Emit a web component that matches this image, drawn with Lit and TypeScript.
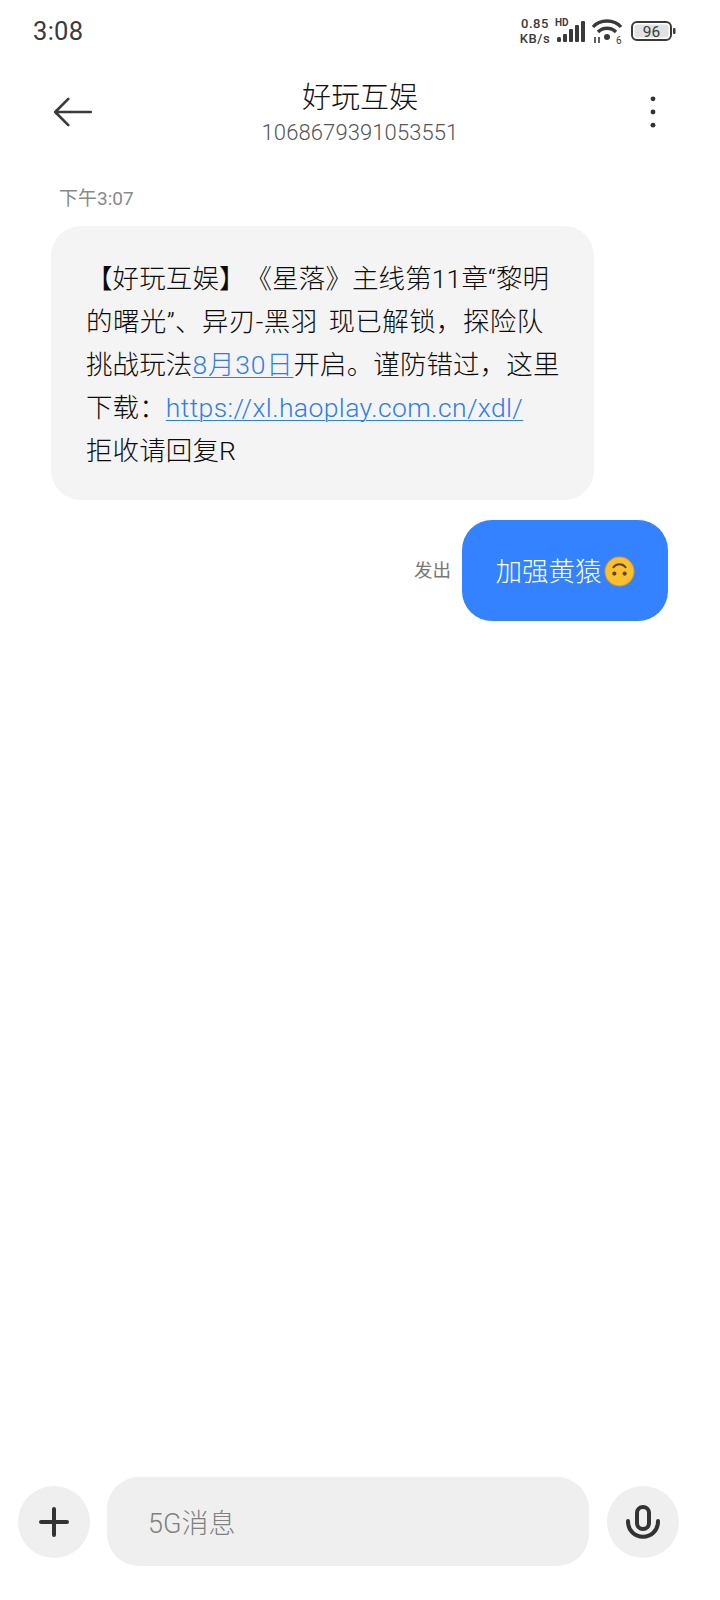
import { LitElement, css, html } from 'lit';
import { customElement } from 'lit/decorators.js';

@customElement('app-root')
export class AppRoot extends LitElement {
    static styles = css`
        :host {
            display: block;
            width: 720px;
            height: 1600px;
            background: #fff;
            font-family: "Roboto", "Noto Sans CJK SC", sans-serif;
            color: #1c1c1c;
            text-spacing-trim: space-all;
        }

        .page {
            height: 1600px;
            display: flex;
            flex-direction: column;
            overflow: hidden;
        }

        .status {
            height: 62px;
            flex: none;
            padding: 0 43px 0 33px;
            display: flex;
            align-items: center;
            justify-content: space-between;
            color: #3a3a3a;
        }

        .clock {
            font-size: 25.5px;
            letter-spacing: 0.3px;
        }

        .status-icons {
            display: flex;
            align-items: center;
            gap: 3px;
        }

        .speed {
            font-size: 13px;
            line-height: 15.5px;
            font-weight: 500;
            letter-spacing: 0.6px;
            text-align: center;
            width: 34px;
        }

        .header {
            height: 100px;
            flex: none;
            padding: 0 53px;
            display: grid;
            grid-template-columns: 1fr auto 1fr;
            align-items: center;
        }

        .more {
            justify-self: end;
            margin-right: 11px;
        }

        .peer {
            display: flex;
            flex-direction: column;
            align-items: center;
        }

        .peer-name {
            font-size: 29px;
            line-height: 42px;
            font-weight: 300;
            color: #111;
        }

        .peer-number {
            font-size: 22px;
            line-height: 28px;
            font-weight: 300;
            letter-spacing: 0.1px;
            color: #555;
        }

        .thread {
            flex: 1;
            padding: 24px 52px 0 51px;
            display: flex;
            flex-direction: column;
        }

        .time {
            margin-left: 8px;
            font-size: 19px;
            line-height: 26px;
            color: #8a8a8a;
        }

        .bubble {
            margin-top: 14px;
            width: 543px;
            height: 274px;
            box-sizing: border-box;
            padding: 31px 0 0 35px;
            background: #f4f4f4;
            border-radius: 30px;
            font-size: 26.5px;
            line-height: 43px;
            font-weight: 300;
            letter-spacing: 0.1px;
            word-spacing: 4px;
            white-space: nowrap;
            color: #0c0c0c;
        }

        .bubble a {
            color: #2f7ee8;
            text-decoration: underline;
            text-decoration-thickness: 1px;
            text-underline-offset: 3px;
        }

        .second-line {
            letter-spacing: 0.4px;
        }

        .date {
            letter-spacing: 0.8px;
        }

        .url {
            letter-spacing: 0.4px;
        }

        .sent-row {
            margin-top: 20px;
            display: flex;
            justify-content: flex-end;
            align-items: center;
            gap: 11px;
        }

        .sent-label {
            font-size: 18.5px;
            color: #777;
            margin-top: -4px;
        }

        .sent {
            width: 206px;
            height: 101px;
            box-sizing: border-box;
            padding-bottom: 3px;
            display: flex;
            align-items: center;
            justify-content: center;
            gap: 2px;
            background: #3482ff;
            border-radius: 30px;
            color: #fff;
            font-size: 26.5px;
            font-weight: 300;
        }

        .emoji {
            margin-top: 4px;
        }

        .composer {
            flex: none;
            height: 89px;
            margin-bottom: 34px;
            padding: 0 41px 0 18px;
            display: flex;
            align-items: center;
        }

        .round {
            width: 72px;
            height: 72px;
            flex: none;
            border-radius: 50%;
            background: #efefef;
            display: flex;
            align-items: center;
            justify-content: center;
        }

        .field {
            flex: 1;
            height: 89px;
            margin: 0 18px 0 17px;
            padding-left: 41px;
            display: flex;
            align-items: center;
            background: #efefef;
            border-radius: 32px;
            font-size: 27px;
            font-weight: 300;
            color: #808080;
        }
    `;

    render() {
        return html`
            <div class="page">
                <div class="status">
                    <span class="clock">3:08</span>
                    <div class="status-icons">
                        <div class="speed">0.85<br>KB/s</div>
                        <svg width="33" height="26" viewBox="0 0 33 26" fill="#3a3a3a">
                            <text x="0" y="8" font-size="10" font-weight="700" font-family="Roboto">HD</text>
                            <rect x="2" y="19" width="4" height="5" rx="1.5"/>
                            <rect x="8" y="16" width="4" height="8" rx="1"/>
                            <rect x="14" y="11" width="4" height="13" rx="1"/>
                            <rect x="20" y="7" width="4" height="17" rx="1"/>
                            <rect x="26" y="3" width="4" height="21" rx="1"/>
                        </svg>
                        <svg width="32" height="28" viewBox="0 0 32 28" fill="none" stroke="#3a3a3a" stroke-width="3.4">
                            <path d="M2 10 C9 2 23 2 30 10"/>
                            <path d="M7 15 C12 10 20 10 25 15"/>
                            <circle cx="16" cy="20" r="3" fill="#3a3a3a" stroke="none"/>
                            <path d="M4 20 V26 M8 20 V26" stroke-width="1.6"/>
                            <text x="25" y="27" font-size="10" font-family="Roboto" fill="#3a3a3a" stroke="none">6</text>
                        </svg>
                        <svg width="46" height="22" viewBox="0 0 46 22" style="margin-left: 5px">
                            <rect x="1" y="2" width="39" height="18" rx="5" fill="none" stroke="#3a3a3a" stroke-width="2"/>
                            <rect x="3.5" y="4.5" width="34" height="13" rx="3" fill="#e2e2e2"/>
                            <text x="20.5" y="16.5" font-size="15.5" font-family="Roboto" text-anchor="middle" fill="#3a3a3a">96</text>
                            <rect x="42" y="8" width="2.5" height="6" rx="1" fill="#3a3a3a"/>
                        </svg>
                    </div>
                </div>

                <div class="header">
                    <svg width="40" height="30" viewBox="0 0 42 32" fill="none" stroke="#3a3a3a" stroke-width="2.8" stroke-linecap="round" stroke-linejoin="round">
                        <path d="M40 16 H3 M16 2 L2 16 L16 30"/>
                    </svg>
                    <div class="peer">
                        <span class="peer-name">好玩互娱</span>
                        <span class="peer-number">1068679391053551</span>
                    </div>
                    <svg class="more" width="6" height="32" viewBox="0 0 6 34" fill="#333">
                        <circle cx="3" cy="3" r="2.6"/>
                        <circle cx="3" cy="17" r="2.6"/>
                        <circle cx="3" cy="31" r="2.6"/>
                    </svg>
                </div>

                <div class="thread">
                    <span class="time">下午3:07</span>
                    <div class="bubble">
                        【好玩互娱】《星落》主线第11章“黎明<br>
                        <span class="second-line">的曙光”、异刃-黑羽 现已解锁，探险队</span><br>
                        挑战玩法<a class="date">8月30日</a>开启。谨防错过，这里<br>
                        下载：<a class="url">https://xl.haoplay.com.cn/xdl/</a><br>
                        拒收请回复R
                    </div>
                    <div class="sent-row">
                        <span class="sent-label">发出</span>
                        <div class="sent">
                            加强黄猿
                            <svg class="emoji" width="31" height="31" viewBox="0 0 30 30">
                                <circle cx="15" cy="15" r="14" fill="#fbc02d" stroke="#e59a1c" stroke-width="1"/>
                                <path d="M9 11 C12 7 18 7 21 11" fill="none" stroke="#5d4037" stroke-width="1.8" stroke-linecap="round"/>
                                <circle cx="10" cy="17" r="2" fill="#5d4037"/>
                                <circle cx="20" cy="17" r="2" fill="#5d4037"/>
                            </svg>
                        </div>
                    </div>
                </div>

                <div class="composer">
                    <div class="round">
                        <svg width="30" height="30" viewBox="0 0 30 30" stroke="#333" stroke-width="4" stroke-linecap="round">
                            <path d="M15 2 V28 M2 15 H28"/>
                        </svg>
                    </div>
                    <div class="field">5G消息</div>
                    <div class="round">
                        <svg width="36" height="36" viewBox="0 0 36 36" fill="none" stroke="#333" stroke-width="4" stroke-linecap="round">
                            <rect x="12" y="3" width="12" height="22" rx="6"/>
                            <path d="M3 17 C3 38 33 38 33 17"/>
                        </svg>
                    </div>
                </div>
            </div>
        `;
    }
}
